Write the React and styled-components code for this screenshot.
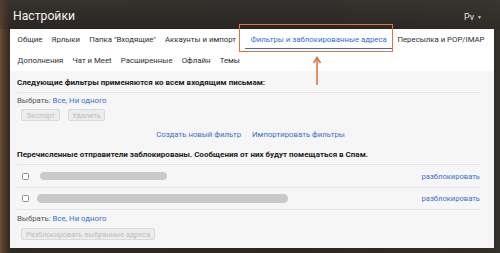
import React from "react";
import styled, { createGlobalStyle } from "styled-components";

const Global = createGlobalStyle`
  html, body { margin: 0; padding: 0; }
  body {
    width: 500px;
    height: 253px;
    overflow: hidden;
    font-family: Roboto, "Liberation Sans", Arial, sans-serif;
    background: linear-gradient(90deg, #6a4d33 0px, #4b3727 5px, #2e2a26 10px, #2b2825 60%, #332f2b 100%);
  }
`;

const Page = styled.div`
  width: 500px;
  height: 253px;
  display: flex;
  flex-direction: column;
`;

const TopBar = styled.header`
  height: 29px;
  display: flex;
  align-items: center;
  justify-content: space-between;
  padding: 0 18px 0 13px;
  box-sizing: border-box;
  background: linear-gradient(180deg, rgba(60, 56, 52, 0.6), rgba(30, 28, 26, 0.2));
`;

const Title = styled.h1`
  margin: 0;
  font-size: 12.2px;
  font-weight: 400;
  color: #f2f2f2;
  padding-top: 2px;
`;

const Account = styled.div`
  display: flex;
  align-items: center;
  gap: 3px;
  font-size: 9px;
  color: #e8e8e8;
  padding-top: 4px;
`;

const Caret = styled.span`
  font-size: 5px;
  color: #cfcfcf;
`;

const Panel = styled.main`
  position: relative;
  margin: 0 6px 0 10px;
  height: 219px;
  background: #ffffff;
  display: flex;
  flex-direction: column;
  box-shadow: 0 0 1px rgba(0,0,0,0.4);
`;

const Tabs = styled.nav`
  padding: 0 0 0 3px;
  display: flex;
  flex-direction: column;
  background: #fff;
`;

const TabRow = styled.div`
  display: flex;
  height: 21px;
  align-items: stretch;
`;

const Tab = styled.span`
  position: relative;
  padding: 0 4.6px;
  font-size: 7.8px;
  line-height: 21px;
  white-space: nowrap;
  color: ${(p) => (p.$active ? "#2f6fd6" : "#2e2e2e")};
  ${(p) =>
    p.$active &&
    `
    margin-left: 4px;
    padding: 0 6px 0 6px;
    &::after {
      content: "";
      position: absolute;
      left: 0;
      right: 1px;
      bottom: 1px;
      height: 1.5px;
      background: #2f6fd6;
    }
  `}
`;

const Highlight = styled.div`
  position: absolute;
  left: 229px;
  top: -5px;
  width: 154px;
  height: 28px;
  border: 1.5px solid #ea6f3b;
  box-sizing: border-box;
  pointer-events: none;
`;

const Arrow = styled.svg`
  position: absolute;
  left: 302px;
  top: 26px;
  pointer-events: none;
`;

const Content = styled.section`
  flex: 1;
  background: #f6f6f6;
  padding: 0 14px 0 7px;
  display: flex;
  flex-direction: column;
  font-size: 7.8px;
  color: #3a3a3a;
`;

const Heading = styled.div`
  height: ${(p) => p.$h || 22}px;
  display: flex;
  align-items: center;
  font-weight: 700;
  font-size: 8px;
  color: #222;
  border-bottom: 1px solid #e2e2e2;
  box-sizing: border-box;
  padding-top: 1px;
`;

const SelectLine = styled.div`
  height: 12px;
  line-height: 12px;
  margin-top: ${(p) => p.$mt || 2}px;
  color: #555;
  white-space: nowrap;
`;

const Link = styled.span`
  color: #3b6fcc;
`;

const ButtonRow = styled.div`
  display: flex;
  gap: 8px;
  padding-left: 4px;
  margin-top: 2px;
`;

const GrayButton = styled.button`
  height: 12px;
  width: ${(p) => p.$w}px;
  padding: 0;
  font-family: inherit;
  font-size: 7.3px;
  color: #bdbdbd;
  background: #ececec;
  border: 1px solid #dadada;
  border-radius: 2px;
  box-sizing: border-box;
`;

const LinkRow = styled.div`
  height: 20px;
  margin-top: 3px;
  display: flex;
  justify-content: center;
  align-items: center;
  gap: 11px;
  padding-left: 4px;
`;

const BlockedRow = styled.div`
  height: ${(p) => p.$h || 22}px;
  display: flex;
  align-items: center;
  border-bottom: 1px solid #e6e6e6;
  box-sizing: border-box;
  padding-left: 5px;
`;

const Checkbox = styled.span`
  width: 7px;
  height: 7px;
  border: 1px solid #8a8a8a;
  border-radius: 1.5px;
  box-sizing: border-box;
  background: #fff;
  flex: none;
`;

const Pill = styled.span`
  height: ${(p) => p.$h || 8}px;
  width: ${(p) => p.$w}px;
  margin-left: ${(p) => p.$ml}px;
  border-radius: 5px;
  background: #c9c9c9;
  flex: none;
`;

const Unblock = styled(Link)`
  margin-left: auto;
  font-size: 7.6px;
`;

const WideButton = styled(GrayButton)`
  margin-left: 4px;
  margin-top: 3px;
`;

export default function App() {
  return (
    <>
      <Global />
      <Page>
        <TopBar>
          <Title>Настройки</Title>
          <Account>
            Pv <Caret>▼</Caret>
          </Account>
        </TopBar>
        <Panel>
          <Tabs>
            <TabRow>
              <Tab>Общие</Tab>
              <Tab>Ярлыки</Tab>
              <Tab>Папка "Входящие"</Tab>
              <Tab>Аккаунты и импорт</Tab>
              <Tab $active>Фильтры и заблокированные адреса</Tab>
              <Tab>Пересылка и POP/IMAP</Tab>
            </TabRow>
            <TabRow>
              <Tab>Дополнения</Tab>
              <Tab>Чат и Meet</Tab>
              <Tab>Расширенные</Tab>
              <Tab>Офлайн</Tab>
              <Tab>Темы</Tab>
            </TabRow>
          </Tabs>
          <Content>
            <Heading>Следующие фильтры применяются ко всем входящим письмам:</Heading>
            <SelectLine $mt={2}>
              Выбрать: <Link>Все</Link>, <Link>Ни одного</Link>
            </SelectLine>
            <ButtonRow>
              <GrayButton $w={39}>Экспорт</GrayButton>
              <GrayButton $w={37}>Удалить</GrayButton>
            </ButtonRow>
            <LinkRow>
              <Link>Создать новый фильтр</Link>
              <Link>Импортировать фильтры</Link>
            </LinkRow>
            <Heading $h={21}>
              Перечисленные отправители заблокированы. Сообщения от них будут помещаться в Спам.
            </Heading>
            <BlockedRow $h={23}>
              <Checkbox />
              <Pill $w={127} $ml={11} />
              <Unblock>разблокировать</Unblock>
            </BlockedRow>
            <BlockedRow $h={22}>
              <Checkbox />
              <Pill $w={251} $ml={8} $h={9} />
              <Unblock>разблокировать</Unblock>
            </BlockedRow>
            <SelectLine $mt={3}>
              Выбрать: <Link>Все</Link>, <Link>Ни одного</Link>
            </SelectLine>
            <WideButton $w={134}>Разблокировать выбранные адреса</WideButton>
          </Content>
          <Highlight />
          <Arrow width="10" height="32" viewBox="0 0 10 32">
            <line x1="5" y1="4" x2="5" y2="30" stroke="#ea6f3b" strokeWidth="1.6" />
            <path d="M1.5 8 L5 2.5 L8.5 8" fill="none" stroke="#ea6f3b" strokeWidth="1.6" />
          </Arrow>
        </Panel>
      </Page>
    </>
  );
}
